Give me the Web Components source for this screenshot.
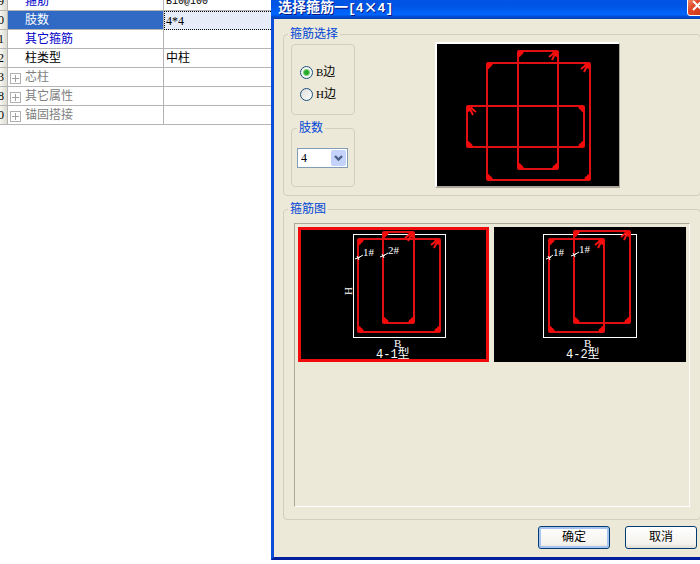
<!DOCTYPE html>
<html lang="zh-CN">
<head>
<meta charset="utf-8">
<title>选择箍筋</title>
<style>
html, body { margin: 0; height: 100%; }
body {
  background: #fff; overflow: hidden; color: #000;
  font: 12px/16px "Liberation Serif", "Noto Sans CJK SC", serif;
}
</style>
</head>
<body>
<stirrup-editor></stirrup-editor>
<script>
const define = (name, html, setup) => {
  const tpl = document.createElement('template');
  tpl.innerHTML = html;
  customElements.define(name, class extends HTMLElement {
    constructor() {
      super();
      this.attachShadow({ mode: 'open' }).append(tpl.content.cloneNode(true));
    }
    connectedCallback() { if (setup) setup(this, this.shadowRoot); }
  });
};

/* ---- property table ---- */
define('property-grid', `
<style>
:host { display: block; overflow: hidden; }
table { border-collapse: separate; border-spacing: 0; table-layout: fixed; width: 100%; margin-top: -8px; }
col.num { width: 8px; } col.name { width: 156px; }
th, td { box-sizing: border-box; height: 19px; padding: 0; font-weight: normal; text-align: left;
  line-height: 16px; white-space: nowrap; overflow: hidden;
  border-right: 1px solid #b4b4b4; border-bottom: 1px solid #b4b4b4; }
th.num { background: linear-gradient(90deg, #f6f5ef, #dddcd2); direction: rtl; padding-right: 4px; }
th.name { padding-left: 17px; }
td { padding-left: 2px; border-right: 0; }
.blue th.name { color: #0000c8; }
.sub th.name { color: #808080; padding-left: 2px; }
.sel th.name { background: #316ac5; color: #fff; }
.sel td { background: #e6edf9; border: 1px dotted #000; border-right: 0; padding-left: 1px; line-height: 14px; }
.mono { font-family: "Liberation Mono", monospace; font-size: 10px; }
button { display: inline-block; vertical-align: -2px; width: 11px; height: 11px; padding: 0; margin: 0 4px 0 0;
  border: 1px solid #b0b0b0; background: #fff; line-height: 0; }
svg { display: block; }
</style>
<table>
  <colgroup><col class="num"><col class="name"><col></colgroup>
  <tbody></tbody>
</table>`, (host, root) => {
  const rows = [
    ['9', '箍筋', '<span class="mono">B10@100</span>', 'blue'],
    ['10', '肢数', '4*4', 'sel'],
    ['11', '其它箍筋', '', 'blue'],
    ['12', '柱类型', '中柱', ''],
    ['13', '芯柱', '', 'sub'],
    ['18', '其它属性', '', 'sub'],
    ['30', '锚固搭接', '', 'sub']
  ];
  const plus = '<button aria-label="展开"><svg width="9" height="9"><path d="M1 4.5H8M4.5 1V8" stroke="#a0a0a0"/></svg></button>';
  root.querySelector('tbody').innerHTML = rows.map(([n, name, value, kind]) =>
    `<tr class="${kind}"><th class="num">${n.slice(-1)}</th><th class="name" scope="row">${kind === 'sub' ? plus : ''}${name}</th><td>${value}</td></tr>`).join('');
});

/* ---- captioned frame ---- */
define('group-box', `
<style>
:host { display: block; }
fieldset { box-sizing: border-box; min-width: 0; margin: 0; border: 1px solid #d0d0bf; border-radius: 4px; padding: var(--pad, 0); }
legend { margin-left: var(--legend-left, 0); padding: 0 2px; line-height: 16px; color: #0046d5; }
</style>
<fieldset><legend></legend><slot></slot></fieldset>`, (host, root) => {
  const legend = root.querySelector('legend');
  const text = host.getAttribute('caption');
  if (text) legend.textContent = text; else legend.remove();
});

/* ---- edge choice ---- */
define('edge-choice', `
<style>
:host { display: grid; gap: 6px; }
label { display: flex; align-items: center; gap: 3px; height: 16px; }
input { appearance: none; box-sizing: border-box; width: 13px; height: 13px; margin: 0; border: 1px solid #1c5180; border-radius: 50%;
  background: linear-gradient(135deg, #dcdcd7, #fff); }
input:checked { background: radial-gradient(circle, #2aa82a 0 2px, #7bd07b 3px, #f4f4f0 4px); }
.l { font-size: 11px; }
</style>
<label><input type="radio" name="edge" checked><span><span class="l">B</span>边</span></label>
<label><input type="radio" name="edge"><span><span class="l">H</span>边</span></label>`);

/* ---- leg count drop-down ---- */
define('leg-select', `
<style>
:host { display: grid; width: 51px; height: 20px; }
select, svg { grid-area: 1 / 1; }
select { appearance: none; box-sizing: border-box; width: 100%; height: 100%; margin: 0; padding: 0 0 0 3px;
  border: 1px solid #7f9db9; border-radius: 0; background: #fff; color: #000; font: inherit; }
svg { justify-self: end; align-self: center; margin-right: 2px; pointer-events: none; }
</style>
<select aria-label="肢数"><option>2</option><option>3</option><option selected>4</option><option>5</option></select>
<svg width="15" height="16"><rect width="15" height="16" rx="2" fill="#c3d3fb"/><path d="M4 6l3.500 3.500L11 6" fill="none" stroke="#4d6185" stroke-width="2.400"/></svg>`);

/* ---- stirrup drawings ---- */
const hoop = (x, y, w, h, hook = 'right') => {
  const r = x + w, b = y + h;
  const corner = (cx, cy, sx, sy) =>
    `<path d="M${cx} ${cy}h${6 * sx}q${-sx} ${4 * sy} ${-3 * sx} ${4 * sy}q0 ${2 * sy} ${-3 * sx} ${2 * sy}z" fill="#f50a0a"/>`;
  const hx = hook === 'right' ? r : x, s = hook === 'right' ? -1 : 1;
  return `<rect x="${x}" y="${y}" width="${w}" height="${h}" rx="1" fill="none" stroke="#e00f14" stroke-width="2"/>`
    + corner(x, y, 1, 1) + corner(r, y, -1, 1) + corner(x, b, 1, -1) + corner(r, b, -1, -1)
    + `<path d="M${hx + 4 * s} ${y + 2}l${5 * s} 4M${hx + s} ${y + 3}l${3 * s} 2l${2 * s} 4" fill="none" stroke="#fa1414" stroke-width="2"/>`;
};
const mark = (x, y, tx, label) =>
  `<path d="M${x - 3} ${y + 1}l5 -2M${x - 1} ${y - 2}l2 4M${x} ${y}L${tx} ${y - 3}" stroke="#fff"/>`
  + `<text x="${tx}" y="${y - 2}" class="s">${label}</text>`;

const drawings = {
  '4x4': { w: 182, h: 142, body: hoop(50, 19, 103, 117) + hoop(81, 7, 40, 118) + hoop(30, 62, 117, 41, 'left') },
  '4-1': { w: 191, h: 135, body:
    '<rect x="55.500" y="7.500" width="92" height="103" fill="none" stroke="#fff"/>'
    + hoop(60, 12, 82, 93) + hoop(85, 5, 31, 91) + mark(60, 31, 65, '1#') + mark(85, 29, 90, '2#')
    + '<text class="s" text-anchor="middle" transform="translate(54 64) rotate(-90)">H</text>'
    + '<text class="s" x="96" y="120">B</text><text class="t" x="78" y="131">4-1型</text>' },
  '4-2': { w: 192, h: 135, body:
    '<rect x="49.500" y="7.500" width="93" height="103" fill="none" stroke="#fff"/>'
    + hoop(55, 12, 55, 93) + hoop(80, 4, 56, 92) + mark(55, 31, 59, '1#') + mark(80, 28, 85, '1#')
    + '<text class="s" x="90" y="120">B</text><text class="t" x="72" y="131">4-2型</text>' }
};
define('stirrup-drawing', `
<style>
:host { display: block; background: #000; }
svg { display: block; }
text { fill: #fff; }
.s { font: 11px "Liberation Serif", serif; }
.t { font: 12px "Liberation Mono", "Noto Sans CJK SC", monospace; }
</style><div></div>`, (host, root) => {
  const d = drawings[host.getAttribute('type')];
  root.querySelector('div').innerHTML = `<svg width="${d.w}" height="${d.h}" viewBox="0 0 ${d.w} ${d.h}">${d.body}</svg>`;
});

/* ---- selectable drawing ---- */
define('stirrup-tile', `
<style>
:host { display: block; }
button { display: block; margin: 0; padding: 0; border: 0; background: #000; }
:host([selected]) button { outline: 3px solid #f00c0c; outline-offset: -3px; }
</style><button><slot></slot></button>`);

/* ---- push button ---- */
define('push-button', `
<style>
:host { display: block; }
button { box-sizing: border-box; width: 72px; height: 23px; margin: 0; padding: 0 0 2px; border: 1px solid #003c74; border-radius: 3px;
  background: linear-gradient(#fff, #f4f3ee 80%, #dedbd0); color: #000; font: inherit; }
:host([default]) button { box-shadow: inset 0 0 0 2px #a9c4f1; }
</style><button><slot></slot></button>`);

/* ---- dialog window ---- */
define('dialog-window', `
<style>
:host { display: block; box-sizing: border-box; background: #ece9d8; border: 3px solid #0b4fd8; border-top: 0; border-bottom-color: #001f9c; }
header { display: flex; justify-content: space-between; height: 19px; box-sizing: border-box; margin: 0 -3px; padding: 0 4px 0 7px;
  background: linear-gradient(#0055e5, #0054e3 30%, #0066ff 80%, #0048c8 95%); border-bottom: 1px solid #0040b8; }
h1 { margin: 0; font-size: 14px; line-height: 12px; color: #fff; text-shadow: 1px 1px #0a1883; white-space: nowrap;
  font-family: "Noto Sans CJK SC", sans-serif; }
.l { font-family: "Liberation Mono", monospace; font-size: 13px; }
.close { box-sizing: border-box; width: 21px; height: 21px; margin: -5px 0 0; padding: 0; border: 1px solid #fff; border-radius: 3px;
  background: linear-gradient(135deg, #f0a080, #e0492a 40%, #c83010); }
.close svg { display: block; margin: auto; }
</style>
<header>
  <h1>选择箍筋一<span class="l">[4</span>×<span class="l">4]</span></h1>
  <button class="close" aria-label="关闭"><svg width="13" height="13"><path d="M2 2l9 9M11 2l-9 9" stroke="#fff" stroke-width="2"/></svg></button>
</header>
<slot></slot>`);

/* ---- page ---- */
define('stirrup-editor', `
<style>
:host { display: grid; grid-template-columns: 271px minmax(0, 1fr); align-items: start; }
dialog-window { margin-right: -12px; }
.body { padding: 7px 8px 8px 9px; display: grid; gap: 5px; }
.choose { --pad: 0 7px 7px; --legend-left: -3px; }
.row { display: flex; gap: 80px; align-items: flex-start; }
.side { width: 64px; padding-top: 2px; display: grid; gap: 5px; }
.edges { --pad: 19px 0 12px 8px; }
.legs { --pad: 12px 0 18px 5px; --legend-left: 0px; }
.preview { border: 2px solid #fff; border-right: 1px solid #aca899; border-bottom: 2px solid #aca899; }
.figures { --pad: 6px 10px 12px; --legend-left: -6px; }
.tiles { display: flex; align-items: flex-start; gap: 5px; box-sizing: border-box; min-height: 284px; padding: 3px;
  border: 1px solid #aca899; border-right-color: #fff; border-bottom-color: #fff; }
.actions { display: flex; justify-content: flex-end; gap: 15px; padding: 1px 4px 0 0; }
</style>
<property-grid></property-grid>
<dialog-window>
  <div class="body">
    <group-box class="choose" caption="箍筋选择">
      <div class="row">
        <div class="side">
          <group-box class="edges"><edge-choice></edge-choice></group-box>
          <group-box class="legs" caption="肢数"><leg-select></leg-select></group-box>
        </div>
        <stirrup-drawing class="preview" type="4x4"></stirrup-drawing>
      </div>
    </group-box>
    <group-box class="figures" caption="箍筋图">
      <div class="tiles">
        <stirrup-tile selected><stirrup-drawing type="4-1"></stirrup-drawing></stirrup-tile>
        <stirrup-tile><stirrup-drawing type="4-2"></stirrup-drawing></stirrup-tile>
      </div>
    </group-box>
    <div class="actions">
      <push-button default>确定</push-button>
      <push-button>取消</push-button>
    </div>
  </div>
</dialog-window>`);
</script>
</body>
</html>
